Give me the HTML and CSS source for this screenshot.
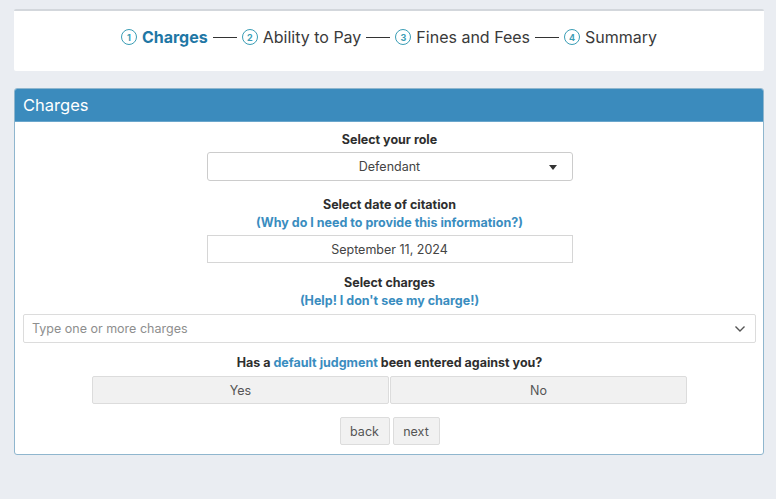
FILE: index.html
```html
<!DOCTYPE html>
<html>
<head>
<meta charset="utf-8">
<link rel="stylesheet" href="styles.css">
</head>
<body>
<div class="page">
  <div class="steps-card">
    <div class="steps">
      <span class="step active"><span class="num">1</span><span class="step-label">Charges</span></span>
      <span class="dash"></span>
      <span class="step"><span class="num">2</span><span class="step-label">Ability to Pay</span></span>
      <span class="dash"></span>
      <span class="step"><span class="num">3</span><span class="step-label">Fines and Fees</span></span>
      <span class="dash"></span>
      <span class="step"><span class="num">4</span><span class="step-label">Summary</span></span>
    </div>
  </div>

  <div class="panel">
    <div class="panel-head">Charges</div>
    <div class="panel-body">
      <div class="label first">Select your role</div>
      <div class="select">
        <span>Defendant</span>
        <span class="caret"></span>
      </div>

      <div class="label gap-lg">Select date of citation</div>
      <a class="help">(Why do I need to provide this information?)</a>
      <div class="input">September 11, 2024</div>

      <div class="label gap-md">Select charges</div>
      <a class="help">(Help! I don't see my charge!)</a>
      <div class="multi">
        <span class="placeholder">Type one or more charges</span>
        <svg class="chev" width="12" height="8" viewBox="0 0 12 8"><path d="M1.5 1.5 L6 6 L10.5 1.5" fill="none" stroke="#555" stroke-width="1.4"/></svg>
      </div>

      <div class="label gap-md">Has a <span class="link">default judgment</span> been entered against you?</div>
      <div class="yesno">
        <div class="btn wide">Yes</div>
        <div class="btn wide">No</div>
      </div>

      <div class="nav">
        <div class="btn small back">back</div>
        <div class="btn small next">next</div>
      </div>
    </div>
  </div>
</div>
</body>
</html>
```

FILE: styles.css
```css
* { box-sizing: border-box; }
html, body { margin: 0; padding: 0; }
body {
  background: #eaedf2;
  font-family: Inter, "Open Sans", "DejaVu Sans", sans-serif;
  color: #333;
}
.page {
  width: 750px;
  margin-left: 14px;
  padding-top: 9px;
}
.steps-card {
  background: #fff;
  border-top: 2px solid #d3d7dc;
  height: 62px;
  display: flex;
  align-items: flex-start;
  justify-content: center;
  padding-top: 16px;
  border-radius: 2px;
}
.steps {
  display: flex;
  align-items: center;
  font-size: 16px;
  line-height: 20px;
  color: #3a3a3a;
  margin-left: 0;
}
.step {
  display: flex;
  align-items: center;
}
.num {
  width: 16px;
  height: 16px;
  border: 1.5px solid #3a9db5;
  border-radius: 50%;
  color: #3a9db5;
  font-size: 9px;
  font-weight: 700;
  line-height: 1;
  display: flex;
  align-items: center;
  justify-content: center;
  margin-right: 5px;
}
.step.active .step-label {
  color: #1f77a5;
  font-weight: 700;
}
.dash {
  width: 24px;
  height: 1px;
  background: #333;
  margin: 0 5px;
}
.panel {
  margin-top: 17px;
  border: 1px solid #8fb6ce;
  border-radius: 3px;
  background: #fff;
  overflow: hidden;
}
.panel-head {
  background: #3b8bbd;
  color: #fff;
  height: 33px;
  font-size: 16.5px;
  line-height: 32px;
  padding-left: 8px;
  border-bottom: 1px solid #6aa6cc;
}
.panel-body {
  padding: 10px 7px 9px 8px;
  display: flex;
  flex-direction: column;
  align-items: center;
}
.label {
  font-size: 12.5px;
  font-weight: 700;
  line-height: 16px;
  color: #2e2e2e;
  text-align: center;
}
.label.gap-lg { margin-top: 16px; }
.label.gap-md { margin-top: 12px; }
.help, .link {
  color: #3a8dbf;
  font-weight: 700;
}
.help {
  font-size: 12.5px;
  line-height: 17px;
  margin-top: 1px;
  text-decoration: none;
}
.select, .input {
  width: 366px;
  border: 1px solid #ccc;
  border-radius: 3px;
  font-size: 12.5px;
  color: #444;
  display: flex;
  align-items: center;
  justify-content: center;
  position: relative;
}
.select {
  height: 29px;
  margin-top: 4px;
}
.caret {
  position: absolute;
  right: 15px;
  top: 12px;
  width: 0;
  height: 0;
  border-left: 4px solid transparent;
  border-right: 4px solid transparent;
  border-top: 5px solid #333;
}
.input {
  height: 28px;
  margin-top: 4px;
  border-radius: 0;
  border-color: #d6d6d6;
}
.multi {
  width: 100%;
  height: 29px;
  margin-top: 5px;
  border: 1px solid #dcdcdc;
  border-radius: 2px;
  display: flex;
  align-items: center;
  justify-content: space-between;
  padding: 0 9px 0 8px;
}
.placeholder {
  font-size: 12.5px;
  color: #8e8e8e;
}
.yesno {
  display: flex;
  gap: 1px;
  margin-top: 5px;
}
.btn {
  background: #f1f1f1;
  border: 1px solid #dcdcdc;
  border-radius: 2px;
  font-size: 12.5px;
  color: #555;
  display: flex;
  align-items: center;
  justify-content: center;
  height: 28px;
}
.btn.wide { width: 297px; }
.nav {
  display: flex;
  gap: 3px;
  margin-top: 13px;
}
.btn.back { width: 50px; }
.btn.next { width: 47px; }
```
